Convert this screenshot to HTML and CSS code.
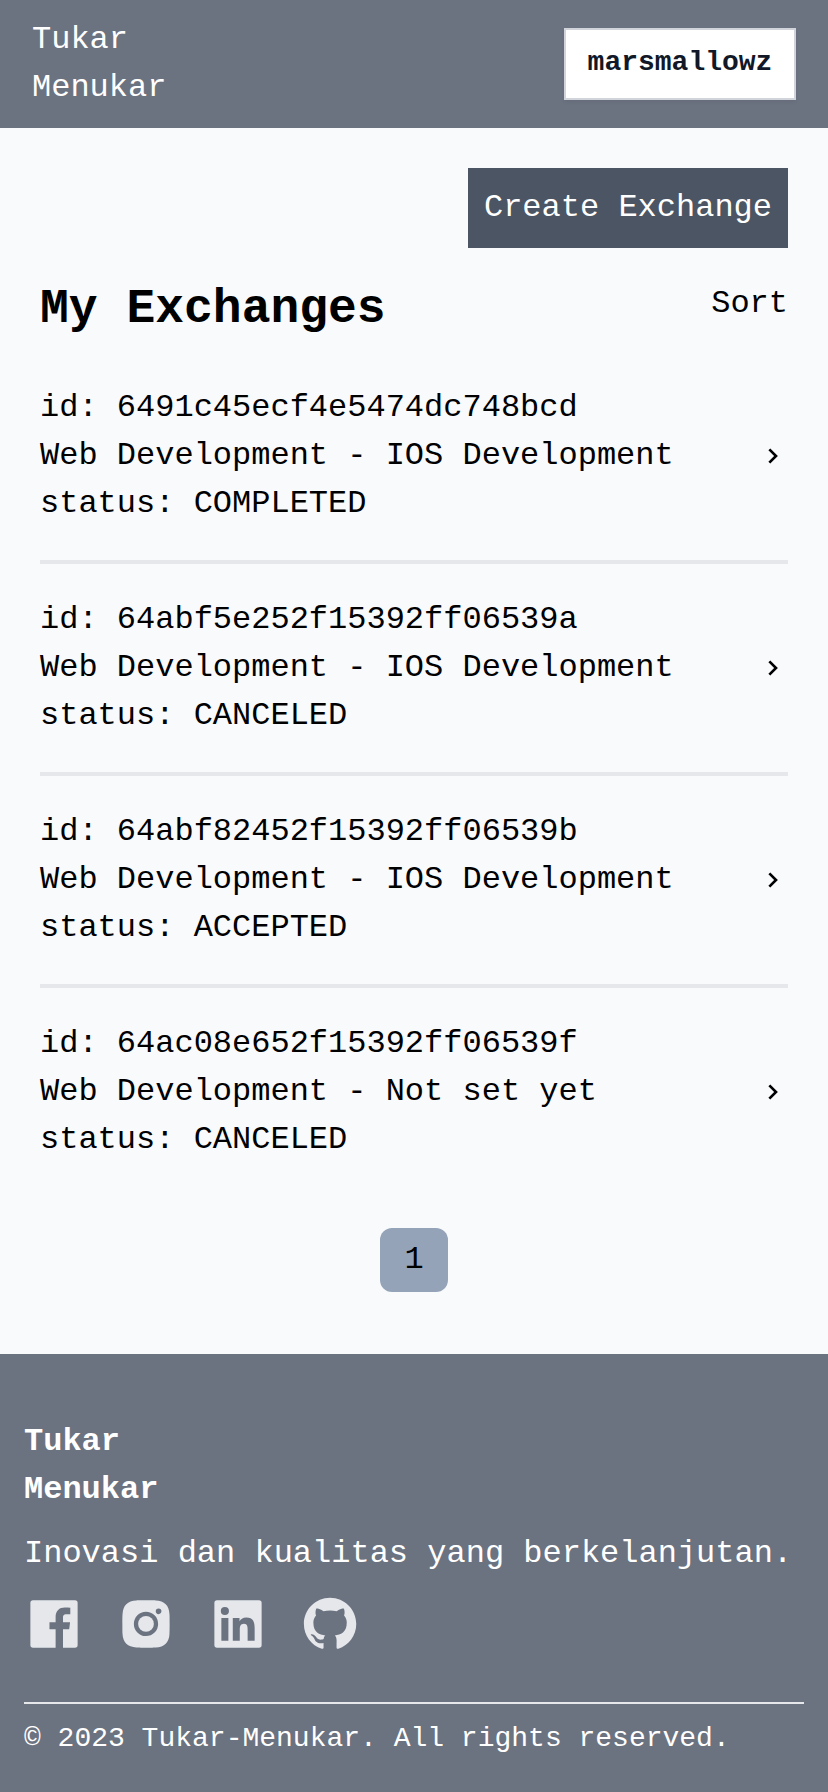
FILE: index.html
```html
<!DOCTYPE html>
<html lang="en">
<head>
<meta charset="utf-8">
<title>Tukar Menukar</title>
<link rel="stylesheet" href="styles.css">
</head>
<body>
<header class="topbar">
  <div class="brand">Tukar<br>Menukar</div>
  <button class="user-button" type="button">marsmallowz</button>
</header>
<main class="content">
  <button class="create-button" type="button">Create Exchange</button>
  <div class="heading-row">
    <h1 class="title">My Exchanges</h1>
    <div class="sort">Sort</div>
  </div>
  <ul class="exchanges">
    <li class="exchange">
      <div><div>id: 6491c45ecf4e5474dc748bcd</div><div>Web Development - IOS Development</div><div>status: COMPLETED</div></div>
      <svg class="chevron" viewBox="0 0 24 24"><path d="M10.707 17.707 16.414 12l-5.707-5.707-1.414 1.414L13.586 12l-4.293 4.293z"/></svg>
    </li>
    <li class="exchange">
      <div><div>id: 64abf5e252f15392ff06539a</div><div>Web Development - IOS Development</div><div>status: CANCELED</div></div>
      <svg class="chevron" viewBox="0 0 24 24"><path d="M10.707 17.707 16.414 12l-5.707-5.707-1.414 1.414L13.586 12l-4.293 4.293z"/></svg>
    </li>
    <li class="exchange">
      <div><div>id: 64abf82452f15392ff06539b</div><div>Web Development - IOS Development</div><div>status: ACCEPTED</div></div>
      <svg class="chevron" viewBox="0 0 24 24"><path d="M10.707 17.707 16.414 12l-5.707-5.707-1.414 1.414L13.586 12l-4.293 4.293z"/></svg>
    </li>
    <li class="exchange">
      <div><div>id: 64ac08e652f15392ff06539f</div><div>Web Development - Not set yet</div><div>status: CANCELED</div></div>
      <svg class="chevron" viewBox="0 0 24 24"><path d="M10.707 17.707 16.414 12l-5.707-5.707-1.414 1.414L13.586 12l-4.293 4.293z"/></svg>
    </li>
  </ul>
  <nav class="pagination"><span class="page">1</span></nav>
</main>
<footer class="footer">
  <div class="footer-brand">Tukar<br>Menukar</div>
  <p class="tagline">Inovasi dan kualitas yang berkelanjutan.</p>
  <div class="socials">
    <svg class="social" viewBox="-0.19 -0.19 24.38 24.38"><path d="M20 3H4a1 1 0 0 0-1 1v16a1 1 0 0 0 1 1h8.615v-6.96h-2.338v-2.725h2.338v-2c0-2.325 1.42-3.592 3.5-3.592.699-.002 1.399.034 2.095.106v2.42h-1.435c-1.128 0-1.348.538-1.348 1.325v1.735h2.697l-.35 2.725h-2.348V21H20a1 1 0 0 0 1-1V4a1 1 0 0 0-1-1z"/></svg>
    <svg class="social" viewBox="-0.19 -0.19 24.38 24.38"><path d="M20.947 8.305a6.53 6.53 0 0 0-.419-2.216 4.61 4.61 0 0 0-2.633-2.633 6.606 6.606 0 0 0-2.186-.42c-.962-.043-1.267-.055-3.709-.055s-2.755 0-3.71.055a6.606 6.606 0 0 0-2.185.42 4.607 4.607 0 0 0-2.633 2.633 6.554 6.554 0 0 0-.419 2.185c-.043.963-.056 1.268-.056 3.71s0 2.754.056 3.71c.015.748.156 1.486.419 2.187a4.61 4.61 0 0 0 2.634 2.632 6.584 6.584 0 0 0 2.185.45c.963.043 1.268.056 3.71.056s2.755 0 3.71-.056a6.59 6.59 0 0 0 2.186-.419 4.615 4.615 0 0 0 2.633-2.633c.263-.7.404-1.438.419-2.187.043-.962.056-1.267.056-3.71-.002-2.442-.002-2.752-.058-3.709zm-8.953 8.297c-2.554 0-4.623-2.069-4.623-4.623s2.069-4.623 4.623-4.623a4.623 4.623 0 0 1 0 9.246zm4.807-8.339a1.077 1.077 0 0 1-1.078-1.078 1.077 1.077 0 1 1 2.155 0c0 .596-.482 1.078-1.077 1.078z"/><circle cx="11.994" cy="11.979" r="3.003"/></svg>
    <svg class="social" viewBox="-0.19 -0.19 24.38 24.38"><path d="M20 3H4a1 1 0 0 0-1 1v16a1 1 0 0 0 1 1h16a1 1 0 0 0 1-1V4a1 1 0 0 0-1-1zM8.339 18.337H5.667v-8.59h2.672v8.59zM7.003 8.574a1.548 1.548 0 1 1 0-3.096 1.548 1.548 0 0 1 0 3.096zm11.335 9.763h-2.669V14.16c0-.996-.018-2.277-1.388-2.277-1.39 0-1.601 1.086-1.601 2.207v4.248h-2.667v-8.59h2.56v1.174h.037c.355-.675 1.227-1.387 2.524-1.387 2.704 0 3.203 1.778 3.203 4.092v4.71z"/></svg>
    <svg class="social" viewBox="-0.19 -0.19 24.38 24.38"><path d="M12.026 2c-5.509 0-9.974 4.465-9.974 9.974 0 4.406 2.857 8.145 6.821 9.465.499.09.679-.217.679-.481 0-.237-.008-.865-.011-1.696-2.775.602-3.361-1.338-3.361-1.338-.452-1.152-1.107-1.459-1.107-1.459-.905-.619.069-.605.069-.605 1.002.07 1.527 1.028 1.527 1.028.89 1.524 2.336 1.084 2.902.829.091-.645.351-1.085.635-1.334-2.214-.251-4.542-1.107-4.542-4.93 0-1.087.389-1.979 1.024-2.675-.101-.253-.446-1.268.099-2.64 0 0 .837-.269 2.742 1.021a9.582 9.582 0 0 1 2.496-.336 9.554 9.554 0 0 1 2.496.336c1.906-1.291 2.742-1.021 2.742-1.021.545 1.372.203 2.387.099 2.64.64.696 1.024 1.587 1.024 2.675 0 3.833-2.33 4.675-4.552 4.922.355.308.675.916.675 1.846 0 1.334-.012 2.41-.012 2.737 0 .267.178.577.687.479C19.146 20.115 22 16.379 22 11.974 22 6.465 17.535 2 12.026 2z"/></svg>
  </div>
  <p class="copyright">© 2023 Tukar-Menukar. All rights reserved.</p>
</footer>
</body>
</html>
```
FILE: styles.css
```css
* {
  box-sizing: border-box;
  margin: 0;
  padding: 0;
}

body {
  display: flex;
  flex-direction: column;
  min-height: 1792px;
  background: #f9fafc;
  color: #000;
  font-family: "Liberation Mono", monospace;
  font-size: 32px;
  line-height: 48px;
}

button {
  border: 0;
  font: inherit;
}

.topbar {
  display: flex;
  justify-content: space-between;
  align-items: center;
  height: 128px;
  padding: 0 32px;
  background: #6b7280;
  color: #fff;
}

.user-button {
  width: 232px;
  height: 72px;
  padding: 15px 23px 17px;
  background: #fff;
  box-shadow: inset 0 0 0 2px #d1d5db, 0 2px 4px rgba(0, 0, 0, 0.05);
  color: #111827;
  font-size: 28px;
  font-weight: 700;
  line-height: 40px;
}

.content {
  display: flex;
  flex-direction: column;
  padding: 40px 40px 62px;
}

.create-button {
  align-self: flex-end;
  padding: 16px;
  background: #4b5563;
  color: #fff;
}

.heading-row {
  display: flex;
  justify-content: space-between;
  align-items: flex-start;
  height: 104px;
  padding-top: 32px;
}

.title {
  font-size: 48px;
  font-weight: 700;
  line-height: 58px;
}

.exchanges {
  list-style: none;
}

.exchange {
  display: flex;
  justify-content: space-between;
  align-items: center;
  padding: 32px 0;
}

.exchange + .exchange {
  border-top: 4px solid #e5e7eb;
}

.chevron {
  width: 32px;
  height: 32px;
}

.pagination {
  display: flex;
  justify-content: center;
  padding-top: 32px;
}

.page {
  padding: 8px 24px;
  border-radius: 12px;
  background: #94a3b8;
}

.footer {
  flex: 1;
  padding: 64px 24px 0;
  background: #6b7280;
  color: #fff;
}

.footer-brand {
  margin-bottom: 16px;
  font-weight: 700;
}

.socials {
  display: flex;
  gap: 28px;
  margin: 14px 0 0 -2px;
}

.social {
  width: 64px;
  height: 64px;
  fill: #e5e7eb;
}

.copyright {
  margin-top: 46px;
  padding-top: 15px;
  border-top: 2px solid #e5e7eb;
  font-size: 28px;
  line-height: 40px;
}
```
